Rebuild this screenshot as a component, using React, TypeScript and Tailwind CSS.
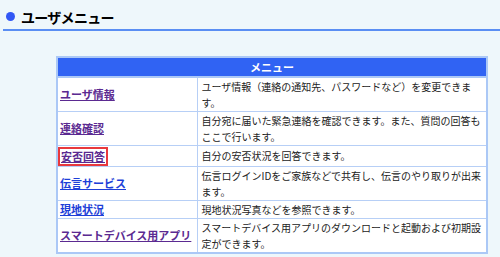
import React from 'react';

interface MenuItem {
  label: string;
  desc: string;
  visited: boolean;
  highlight?: boolean;
}

const items: MenuItem[] = [
  { label: 'ユーザ情報', desc: 'ユーザ情報（連絡の通知先、パスワードなど）を変更できます。', visited: true },
  { label: '連絡確認', desc: '自分宛に届いた緊急連絡を確認できます。また、質問の回答もここで行います。', visited: true },
  { label: '安否回答', desc: '自分の安否状況を回答できます。', visited: true, highlight: true },
  { label: '伝言サービス', desc: '伝言ログインIDをご家族などで共有し、伝言のやり取りが出来ます。', visited: false },
  { label: '現地状況', desc: '現地状況写真などを参照できます。', visited: false },
  { label: 'スマートデバイス用アプリ', desc: 'スマートデバイス用アプリのダウンロードと起動および初期設定ができます。', visited: true },
];

const App: React.FC = () => {
  return (
    <div
      className="w-[500px] h-[257px] bg-[#eef7fb] overflow-hidden"
      style={{ fontFamily: '"Noto Sans CJK JP", "Noto Sans", sans-serif' }}
    >
      {/* 見出し */}
      <div className="ml-[3px] pt-[4px] h-[31px] border-b-2 border-[#5a8ef3] flex items-center pl-[3px]">
        <span className="w-[9px] h-[9px] rounded-full bg-[#3157f5] mr-[6px]" />
        <h1 className="text-[14px] font-bold text-black tracking-[-0.7px] leading-none">ユーザメニュー</h1>
      </div>

      <div className="pl-[56px] pt-[25px]">
        <table className="w-[432px] border-collapse border-2 border-[#abc8f6] bg-white text-[10px] leading-[16px] text-[#222]">
          <thead>
            <tr>
              <th
                colSpan={2}
                className="bg-[#3063f3] text-white text-[11px] font-bold h-[20px] leading-[18px] border-2 border-[#abc8f6]"
              >
                メニュー
              </th>
            </tr>
          </thead>
          <tbody>
            {items.map((item) => (
              <tr key={item.label}>
                <td className="w-[140px] border border-[#b7cff6] px-[2px] py-[0.5px] align-middle">
                  <span
                    className={`inline-block text-[11px] leading-[15px] font-bold underline ${
                      item.visited ? 'text-[#5b2a91]' : 'text-[#1d3fd8]'
                    } ${item.highlight ? 'border-2 border-[#e8383d] px-[1px] -ml-[2px]' : ''}`}
                  >
                    {item.label}
                  </span>
                </td>
                <td className="border border-[#b7cff6] pl-[4px] pr-[3px] py-[0.5px] align-middle">
                  {item.desc}
                </td>
              </tr>
            ))}
          </tbody>
        </table>
      </div>
    </div>
  );
};

export default App;
